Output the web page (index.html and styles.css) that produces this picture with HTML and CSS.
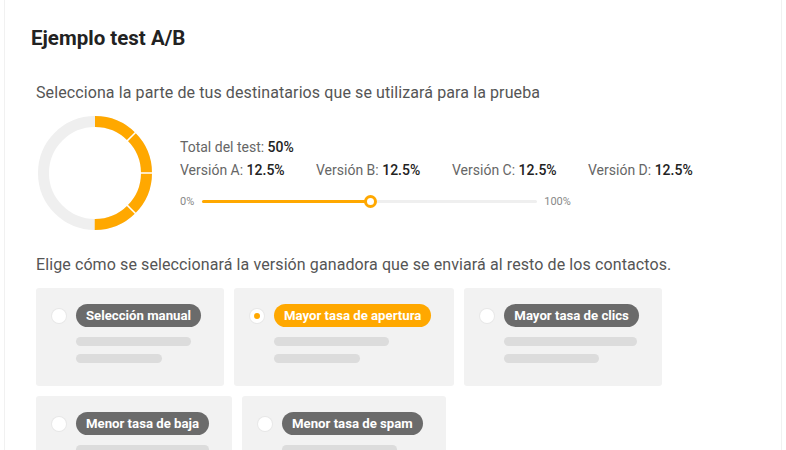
FILE: index.html
```html
<!DOCTYPE html>
<html lang="es">
<head>
  <meta charset="UTF-8">
  <meta name="viewport" content="width=device-width, initial-scale=1.0">
  <title>Ejemplo test A/B</title>
  <link rel="stylesheet" href="styles.css">
</head>
<body>
  <div class="panel">
    <h2>Ejemplo test A/B</h2>

    <div class="seccion">
      <p class="subtitulo">Selecciona la parte de tus destinatarios que se utilizará para la prueba</p>

      <div class="reparto">
        <svg class="donut" width="118" height="118" viewBox="0 0 118 118">
          <circle cx="59" cy="59" r="51.5" fill="none" stroke="#efefef" stroke-width="11"/>
          <circle cx="59" cy="59" r="51.5" fill="none" stroke="#ffa800" stroke-width="11"
                  stroke-dasharray="161.8 323.6" transform="rotate(-90 59 59)"/>
          <line x1="90.1" y1="27.9" x2="100.5" y2="17.5" stroke="#fff" stroke-width="1.5"/>
          <line x1="103" y1="59" x2="118" y2="59" stroke="#fff" stroke-width="1.5"/>
          <line x1="90.1" y1="90.1" x2="100.5" y2="100.5" stroke="#fff" stroke-width="1.5"/>
        </svg>

        <div class="datos">
          <div class="total">Total del test: <b>50%</b></div>
          <div class="versiones">
            <span>Versión A: <b>12.5%</b></span>
            <span>Versión B: <b>12.5%</b></span>
            <span>Versión C: <b>12.5%</b></span>
            <span>Versión D: <b>12.5%</b></span>
          </div>
          <div class="slider">
            <span class="lim">0%</span>
            <div class="pista">
              <div class="relleno"></div>
              <div class="tirador"></div>
            </div>
            <span class="lim">100%</span>
          </div>
        </div>
      </div>

      <p class="subtitulo">Elige cómo se seleccionará la versión ganadora que se enviará al resto de los contactos.</p>

      <div class="opciones">
        <div class="opcion">
          <span class="radio"></span>
          <div class="cuerpo">
            <span class="pill">Selección manual</span>
            <span class="linea l115"></span>
            <span class="linea l86"></span>
          </div>
        </div>
        <div class="opcion activa">
          <span class="radio"></span>
          <div class="cuerpo">
            <span class="pill">Mayor tasa de apertura</span>
            <span class="linea l115"></span>
            <span class="linea l86"></span>
          </div>
        </div>
        <div class="opcion">
          <span class="radio"></span>
          <div class="cuerpo">
            <span class="pill">Mayor tasa de clics</span>
            <span class="linea l133"></span>
            <span class="linea l95"></span>
          </div>
        </div>
        <div class="opcion">
          <span class="radio"></span>
          <div class="cuerpo">
            <span class="pill">Menor tasa de baja</span>
            <span class="linea l133"></span>
            <span class="linea l95"></span>
          </div>
        </div>
        <div class="opcion">
          <span class="radio"></span>
          <div class="cuerpo">
            <span class="pill">Menor tasa de spam</span>
            <span class="linea l115"></span>
            <span class="linea l86"></span>
          </div>
        </div>
      </div>
    </div>
  </div>
</body>
</html>
```

FILE: styles.css
```css
body {
  margin: 0;
  padding: 0 4px;
  font-family: Roboto, "Liberation Sans", sans-serif;
  background: white;
  overflow: hidden;
}

.panel {
  border-left: 1px solid #f1f1f1;
  border-right: 1px solid #f1f1f1;
  padding: 25px 20px 30px 25px;
  min-height: 450px;
  box-sizing: border-box;
}

h2 {
  margin: 0 0 0 1px;
  font-size: 20.5px;
  font-weight: 700;
  color: #222;
  line-height: 26px;
}

.seccion {
  padding-left: 6px;
}

.subtitulo {
  margin: 0;
  font-size: 16px;
  letter-spacing: 0.1px;
  color: #555;
  line-height: 20px;
}

.seccion > .subtitulo:first-child {
  margin-top: 32px;
}

.reparto {
  display: flex;
  align-items: center;
  gap: 26px;
  margin: 11px 0 23px 0;
}

.donut {
  display: block;
  flex-shrink: 0;
}

.datos {
  font-size: 14px;
  color: #666;
}

.datos b {
  color: #222;
  font-weight: 500;
}

.total {
  line-height: 18px;
}

.versiones {
  display: grid;
  grid-template-columns: repeat(4, 136px);
  margin-top: 5px;
  line-height: 18px;
}

.slider {
  display: flex;
  align-items: center;
  margin-top: 16px;
}

.lim {
  font-size: 11px;
  color: #888;
}

.pista {
  position: relative;
  width: 335px;
  height: 3px;
  background: #efefef;
  margin: 0 7px 0 8px;
  border-radius: 2px;
}

.relleno {
  width: 168px;
  height: 3px;
  background: #ffa800;
  border-radius: 2px;
}

.tirador {
  position: absolute;
  left: 162px;
  top: -5px;
  width: 7px;
  height: 7px;
  border-radius: 50%;
  background: white;
  border: 3.5px solid #ffa800;
}

.opciones {
  display: flex;
  flex-wrap: wrap;
  gap: 10px;
  margin-top: 13px;
  max-width: 700px;
}

.opcion {
  display: flex;
  align-items: flex-start;
  background: #f2f2f2;
  border-radius: 3px;
  padding: 16px 23px 23px 16px;
}

.radio {
  width: 14px;
  height: 14px;
  margin-top: 5px;
  margin-right: 10px;
  border-radius: 50%;
  background: white;
  box-shadow: 0 0 0 1px #e8e8e8;
  position: relative;
}

.opcion.activa .radio::after {
  content: "";
  position: absolute;
  left: 4px;
  top: 4px;
  width: 6px;
  height: 6px;
  border-radius: 50%;
  background: #ffa800;
}

.cuerpo {
  display: flex;
  flex-direction: column;
  align-items: flex-start;
}

.pill {
  background: #6b6b6b;
  color: white;
  font-size: 13.2px;
  font-weight: 700;
  line-height: 23px;
  padding: 0 10px;
  border-radius: 12px;
  white-space: nowrap;
  margin-bottom: 10px;
}

.opcion.activa .pill {
  background: #ffa800;
}

.linea {
  display: block;
  height: 9px;
  border-radius: 5px;
  background: #dcdcdc;
}

.linea + .linea {
  margin-top: 8px;
}

.l115 { width: 115px; }
.l86 { width: 86px; }
.l133 { width: 133px; }
.l95 { width: 95px; }
```
